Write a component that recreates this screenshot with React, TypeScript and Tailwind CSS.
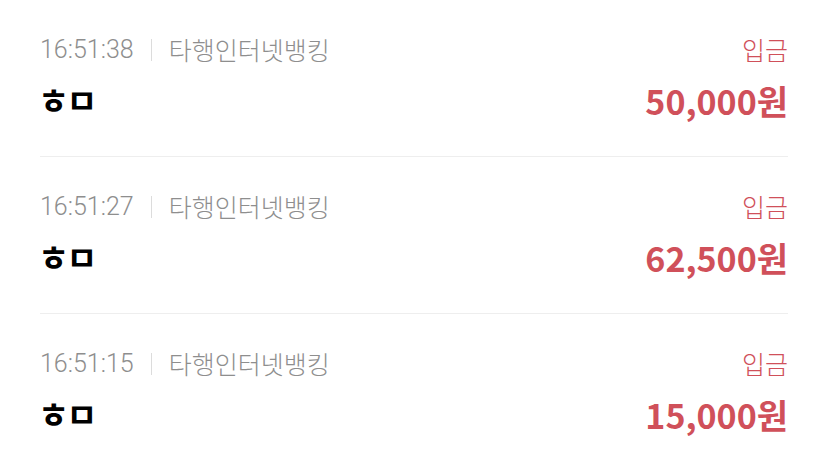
import React from "react";

const rows = [
  { time: "16:51:38", bank: "타행인터넷뱅킹", name: "ㅎㅁ", type: "입금", amount: "50,000원" },
  { time: "16:51:27", bank: "타행인터넷뱅킹", name: "ㅎㅁ", type: "입금", amount: "62,500원" },
  { time: "16:51:15", bank: "타행인터넷뱅킹", name: "ㅎㅁ", type: "입금", amount: "15,000원" },
];

export default function App() {
  return (
    <div
      className="w-[828px] h-[468px] bg-white px-10 overflow-hidden"
      style={{ fontFamily: '"Noto Sans CJK KR", "Noto Sans", sans-serif' }}
    >
      {rows.map((r, i) => (
        <div key={i} className="border-b border-[#eeeeee] pt-[34px] pb-[36px]">
          <div className="flex items-center justify-between h-8">
            <div className="flex items-center text-[#8e8e8e]">
              <span className="text-[25px] font-light" style={{ fontFamily: 'Roboto, "Noto Sans CJK KR", sans-serif' }}>
                {r.time}
              </span>
              <span className="w-px h-[22px] bg-[#dcdcdc] mx-[17px]"></span>
              <span className="text-[25px] font-light">{r.bank}</span>
            </div>
            <span className="text-[25px] font-light text-[#d0505a]">{r.type}</span>
          </div>
          <div className="flex items-center justify-between h-10 mt-[14px]">
            <span className="text-[34px] font-bold leading-none text-black tracking-[-3px] -ml-[2px]">{r.name}</span>
            <span className="text-[34px] font-bold text-[#d0505a]">{r.amount}</span>
          </div>
        </div>
      ))}
    </div>
  );
}
